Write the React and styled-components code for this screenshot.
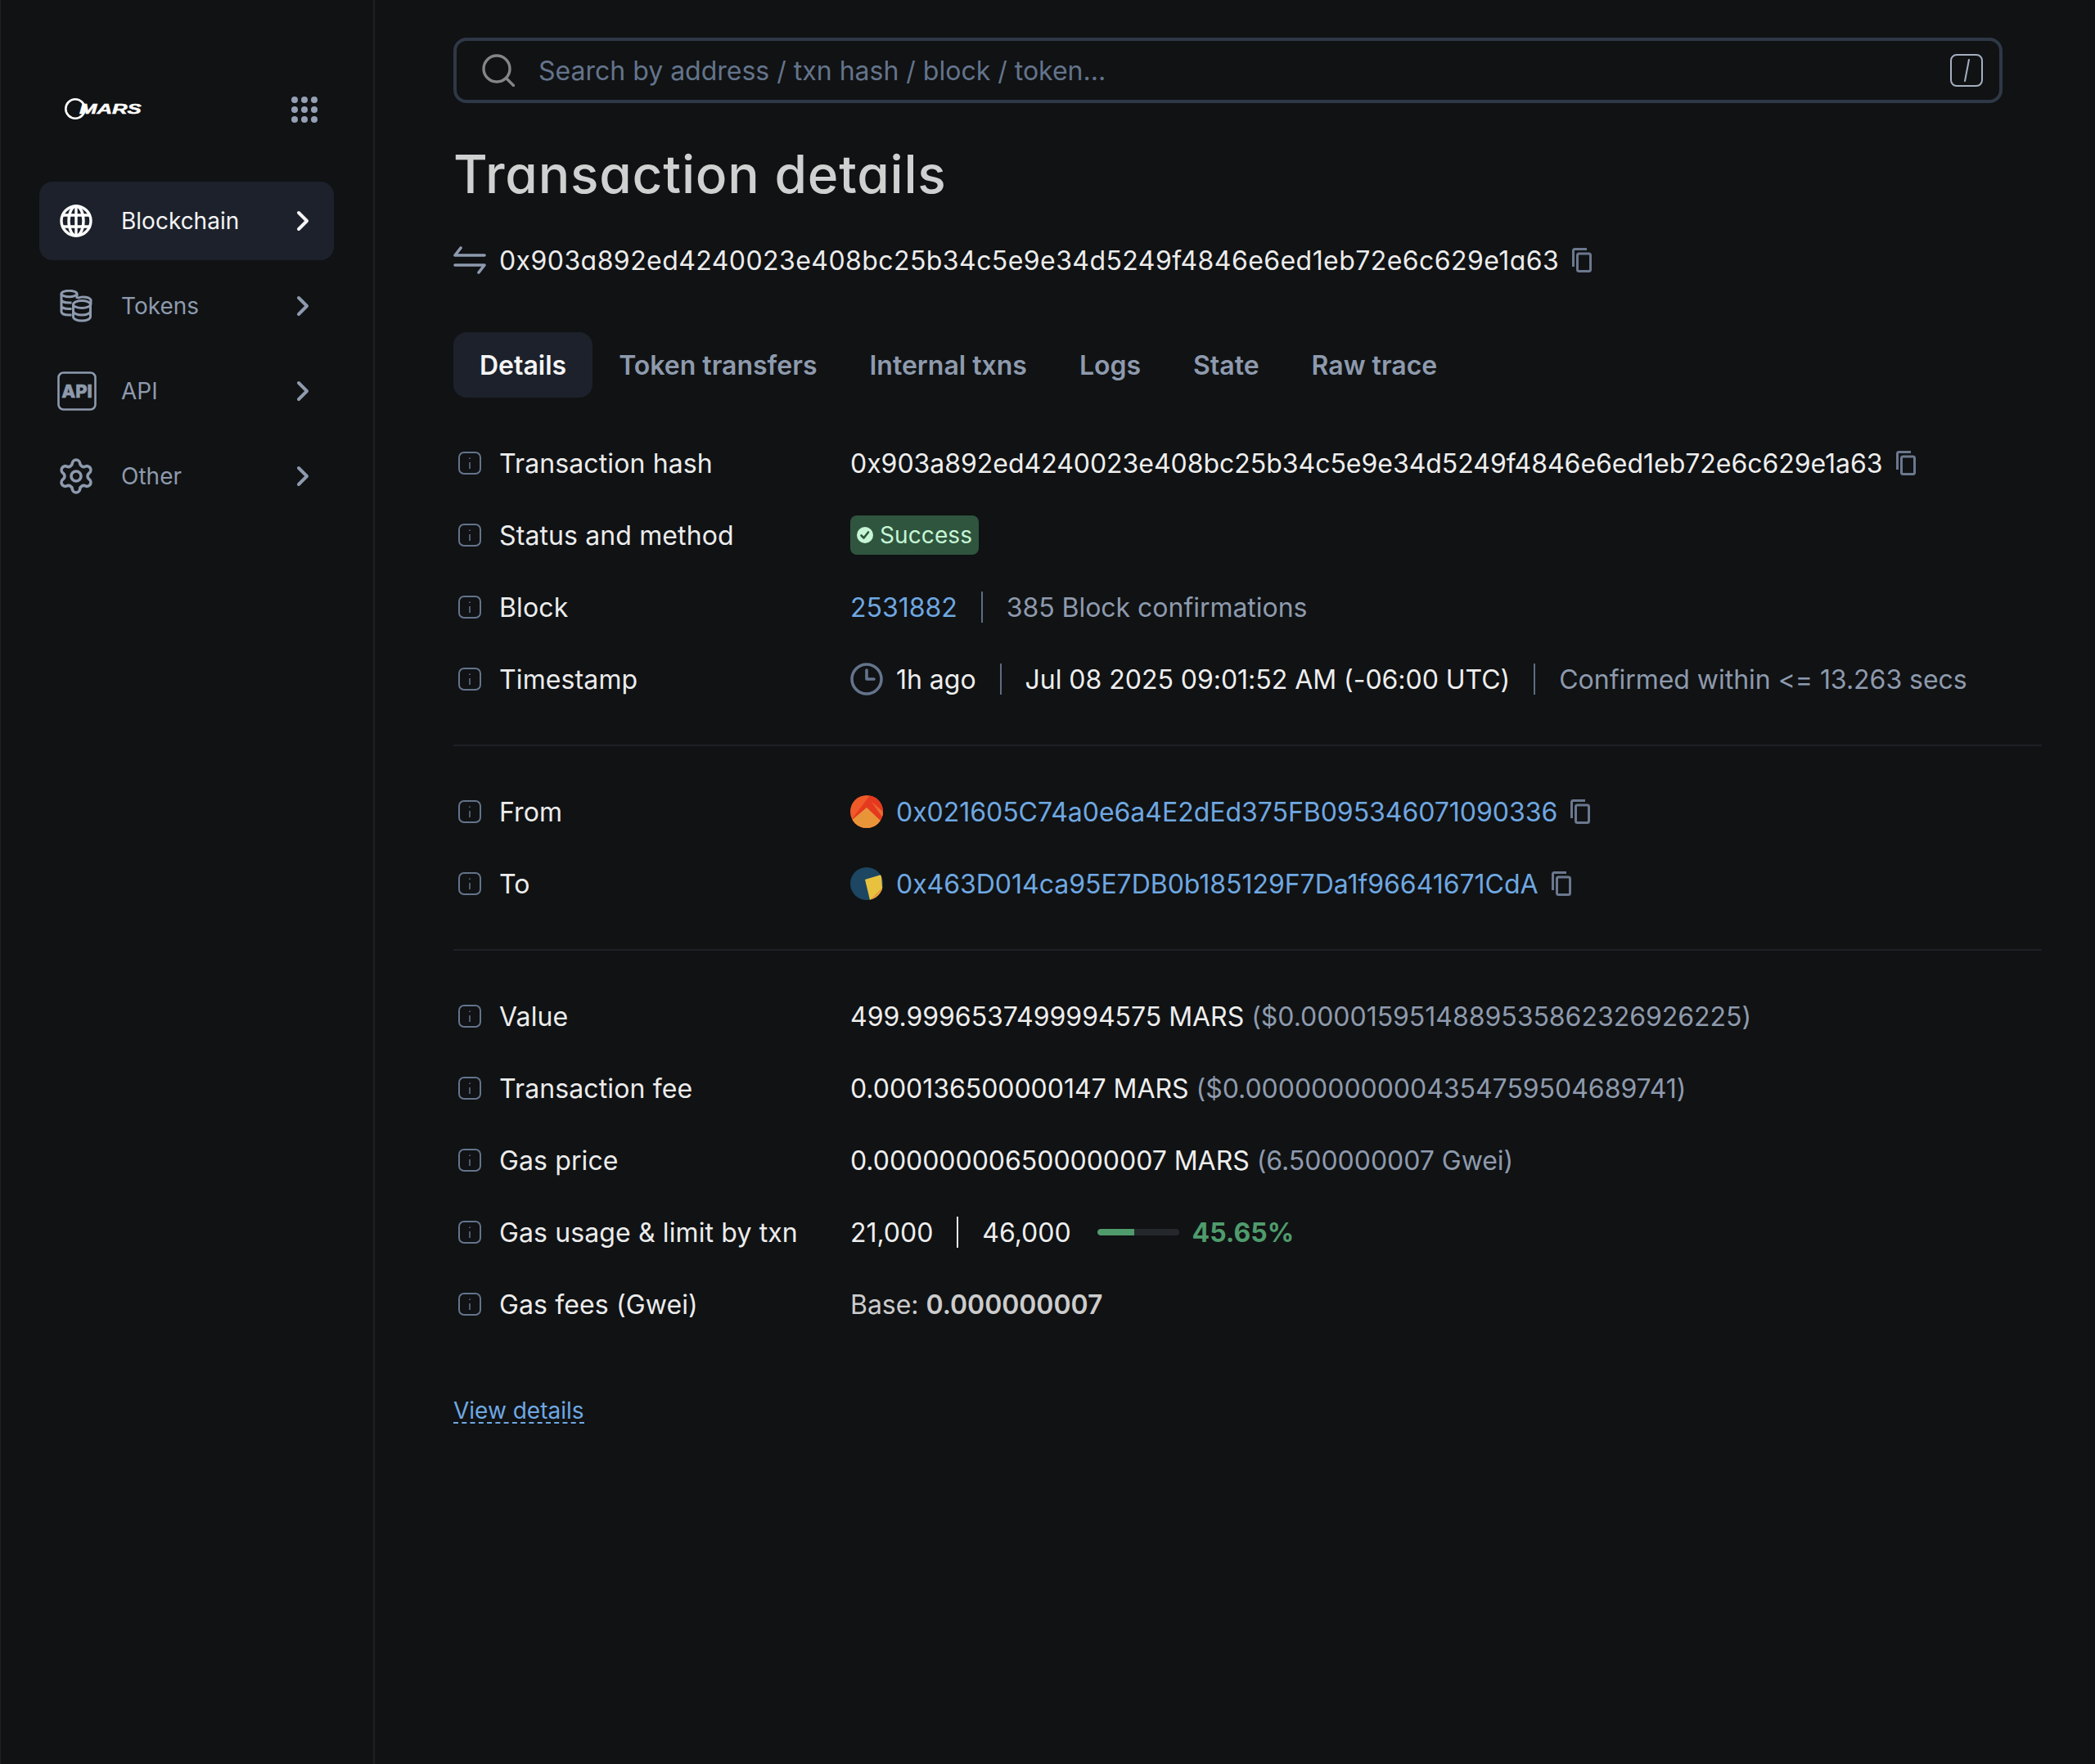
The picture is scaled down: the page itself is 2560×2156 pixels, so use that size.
import React from 'react';
import styled, { createGlobalStyle } from 'styled-components';
import { Settings } from 'lucide-react';

const GlobalStyle = createGlobalStyle`
  html, body {
    margin: 0;
    padding: 0;
    background: #101214;
  }
  * {
    box-sizing: border-box;
  }
`;

const Page = styled.div`
  display: flex;
  width: 2560px;
  min-height: 2156px;
  background: #101214;
  font-family: Inter, 'Liberation Sans', sans-serif;
  color: #eeeeee;
`;

const Sidebar = styled.aside`
  flex: none;
  width: 458px;
  padding: 116px 48px 0 47px;
  border-left: 1px solid #1d2025;
  border-right: 2px solid #1d2025;
`;

const LogoRow = styled.div`
  display: flex;
  align-items: center;
  justify-content: space-between;
  height: 36px;
  padding: 0 20px 0 31px;
  margin-bottom: 70px;
`;

const Logo = styled.div`
  display: flex;
  align-items: center;
  margin-top: -2px;
`;

const LogoWord = styled.span`
  margin-left: -8px;
  font-family: 'Liberation Sans', sans-serif;
  font-size: 16.5px;
  font-weight: 700;
  font-style: italic;
  color: #ffffff;
  transform: scaleX(1.56);
  transform-origin: left center;
  -webkit-text-stroke: 0.5px #ffffff;
`;

const NavList = styled.nav`
  display: flex;
  flex-direction: column;
  gap: 8px;
`;

const NavItem = styled.a`
  display: flex;
  align-items: center;
  height: 96px;
  padding: 0 30px 0 25px;
  border-radius: 16px;
  background: ${p => (p.$active ? '#1c212b' : 'transparent')};
  color: ${p => (p.$active ? '#f4f4f5' : '#8e9aad')};
  font-size: 28px;
`;

const NavIcon = styled.span`
  display: flex;
  align-items: center;
  justify-content: center;
  flex: none;
  width: 40px;
  height: 48px;
  margin-right: 35px;
  color: ${p => (p.$active ? '#ffffff' : '#8e9aad')};
  & > svg {
    flex: none;
  }
`;

const NavLabel = styled.span`
  flex: 1;
`;

const Main = styled.main`
  flex: 1;
  min-width: 0;
  padding: 46px 65px 0 96px;
`;

const SearchBar = styled.div`
  display: flex;
  align-items: center;
  width: 1893px;
  height: 80px;
  padding: 0 20px 0 31px;
  border: 4px solid #2f3846;
  border-radius: 16px;
`;

const SearchText = styled.span`
  flex: 1;
  margin-left: 29px;
  font-size: 32px;
  color: #64748b;
`;

const Title = styled.h1`
  margin: 48px 0 0;
  height: 80px;
  line-height: 78px;
  font-size: 64px;
  font-weight: 500;
  color: #cfd1d1;
  font-feature-settings: 'cv11' 1;
  letter-spacing: 0.8px;
`;

const HashRow = styled.div`
  display: flex;
  align-items: center;
  height: 48px;
  margin-top: 40px;
  font-size: 32px;
  letter-spacing: 0.43px;
  font-feature-settings: 'cv11' 1;
  color: #ececec;
`;

const HashIcon = styled.svg`
  flex: none;
  width: 40px;
  height: 40px;
  margin-right: 16px;
  color: #8e9aad;
`;

const Tabs = styled.div`
  display: flex;
  margin-top: 64px;
  margin-bottom: 36px;
`;

const Tab = styled.a`
  display: flex;
  align-items: center;
  height: 80px;
  padding: 0 32px;
  border-radius: 16px;
  font-size: 32px;
  font-weight: 600;
  background: ${p => (p.$active ? '#1c212b' : 'transparent')};
  color: ${p => (p.$active ? '#f4f4f5' : '#8e9aad')};
`;

const Row = styled.div`
  display: grid;
  grid-template-columns: 485px 1fr;
  align-items: center;
  height: 88px;
`;

const Label = styled.div`
  display: flex;
  align-items: center;
  padding-left: 6px;
  font-size: 32px;
  letter-spacing: 0.12px;
  color: #ececec;
`;

const InfoIcon = styled.svg`
  flex: none;
  width: 28px;
  height: 28px;
  margin-right: 22px;
  color: #64748b;
`;

const Value = styled.div`
  display: flex;
  align-items: center;
  font-size: 32px;
  letter-spacing: -0.03px;
  white-space: pre;
  color: ${p => p.$color || '#eeeeee'};
`;

const Muted = styled.span`
  color: #8e9aad;
`;

const Link = styled.a`
  color: #6fa8e2;
`;

const Strong = styled.span`
  font-weight: 600;
`;

const Divider = styled.span`
  flex: none;
  width: 2px;
  height: 38px;
  margin: 0 29px;
  background: ${p => p.$color || '#5f6d82'};
`;

const CopyIcon = styled.svg`
  flex: none;
  width: 24px;
  height: 30px;
  margin-left: 16px;
  color: #6b788e;
`;

const Badge = styled.span`
  display: flex;
  align-items: center;
  height: 48px;
  padding: 0 8px;
  border-radius: 8px;
  background: #2f553f;
  color: #c6f6d5;
  font-size: 28px;
  letter-spacing: 0.1px;
`;

const BadgeIcon = styled.svg`
  width: 20px;
  height: 20px;
  margin-right: 8px;
`;

const RoundIcon = styled.svg`
  flex: none;
  width: 40px;
  height: 40px;
  margin-right: 16px;
`;

const Separator = styled.hr`
  height: 2px;
  margin: 36px 0;
  border: 0;
  background: #1d2025;
`;

const Track = styled.div`
  width: 100px;
  height: 8px;
  margin: 0 16px 0 32px;
  border-radius: 4px;
  background: #24272b;
  overflow: hidden;
`;

const Fill = styled.div`
  height: 100%;
  border-radius: 4px 0 0 4px;
  background: #4f9b6c;
`;

const Percent = styled.span`
  font-weight: 700;
  color: #4f9b6c;
`;

const ViewDetails = styled.a`
  display: inline-block;
  margin-top: 68px;
  height: 34px;
  line-height: 36px;
  font-size: 28px;
  color: #6fa8e2;
  border-bottom: 2px dashed #6fa8e2;
`;

const GridDots = () => (
  <svg width="32" height="32" viewBox="0 0 32 32" fill="#94a0b4">
    {[4, 16, 28].map(y => [4, 16, 28].map(x => <circle key={x + '-' + y} cx={x} cy={y} r="4" />))}
  </svg>
);

const LogoRing = () => (
  <svg width="26" height="26" viewBox="0 0 26 26" fill="none" stroke="#fff" strokeWidth="2.6">
    <circle cx="13" cy="13" r="11.7" />
  </svg>
);

const GlobeIcon = () => (
  <svg width="40" height="40" viewBox="0 0 40 40" fill="none" stroke="currentColor" strokeWidth="3.4">
    <circle cx="20" cy="20" r="18" />
    <ellipse cx="20" cy="20" rx="9" ry="18" />
    <path d="M20 2v36M3.5 13h33M3.5 27h33" />
  </svg>
);

const CoinsIcon = () => (
  <svg width="40" height="40" viewBox="0 0 40 40" fill="none" stroke="currentColor" strokeWidth="3">
    <ellipse cx="11.5" cy="5" rx="9.5" ry="3.7" />
    <path d="M2 5v22c0 2.5 4 4 9.5 4h3M2 12c0 2.5 4 4 9.5 4h3M2 19.5c0 2.5 4 4 9.5 4h3M21 5v6" />
    <path d="M22 10.5c2-1 4-1.5 6-1.5 5 0 9 1.5 10 3.5v6" />
    <ellipse cx="27" cy="18" rx="10.5" ry="4.5" fill="#101214" />
    <path d="M16.5 18v15c0 3 4.5 5 10.5 5s10.5-2 10.5-5V18M16.5 26c0 3 4.5 5 10.5 5s10.5-2 10.5-5" />
  </svg>
);

const ApiIcon = () => (
  <svg width="48" height="48" viewBox="0 0 48 48" fill="none" style={{ marginLeft: 2 }}>
    <rect x="1.5" y="1.5" width="45" height="45" rx="6" stroke="currentColor" strokeWidth="2.6" />
    <text x="24" y="32" textAnchor="middle" fill="currentColor" stroke="currentColor" strokeWidth="0.6" fontFamily="Inter, sans-serif" fontSize="22" fontWeight="800">API</text>
  </svg>
);

const Chevron = () => (
  <svg width="16" height="26" viewBox="0 0 16 26" fill="none" stroke="currentColor" strokeWidth="4" strokeLinecap="round" strokeLinejoin="round">
    <path d="M3 3l10 10L3 23" />
  </svg>
);

const SearchIcon = () => (
  <svg width="40" height="40" viewBox="0 0 40 40" fill="none" stroke="#858585" strokeWidth="3.4" strokeLinecap="round">
    <circle cx="18" cy="18" r="16" />
    <path d="M30 30l8.5 8.5" />
  </svg>
);

const SlashKey = () => (
  <svg width="40" height="40" viewBox="0 0 40 40" fill="none" stroke="#a5afbf" strokeWidth="2">
    <rect x="1" y="1" width="38" height="38" rx="7" />
    <path d="M23 7l-5 26" strokeLinecap="round" />
  </svg>
);

const SwapIcon = () => (
  <HashIcon viewBox="0 0 40 40" fill="none" stroke="currentColor" strokeWidth="3.6" strokeLinecap="round" strokeLinejoin="round">
    <path d="M9 5l-7 9h36M2 26h36l-7 9" />
  </HashIcon>
);

const Info = () => (
  <InfoIcon viewBox="0 0 28 28" fill="none" stroke="currentColor" strokeWidth="2">
    <rect x="1" y="1" width="26" height="26" rx="6" />
    <path d="M14 13v8M14 7.5v1.5" strokeWidth="1.5" />
  </InfoIcon>
);

const Copy = () => (
  <CopyIcon viewBox="0 0 24 30" fill="none" stroke="currentColor" strokeWidth="3">
    <path d="M18 1.5H3A1.5 1.5 0 0 0 1.5 3v20" />
    <rect x="6.5" y="7" width="16" height="21.5" rx="2" />
  </CopyIcon>
);

const SuccessIcon = () => (
  <BadgeIcon viewBox="0 0 20 20">
    <circle cx="10" cy="10" r="10" fill="#c6f6d5" />
    <path d="M5.5 10.5l3 3 5.5-7" fill="none" stroke="#2f553f" strokeWidth="2.6" strokeLinecap="round" strokeLinejoin="round" />
  </BadgeIcon>
);

const ClockIcon = () => (
  <RoundIcon viewBox="0 0 40 40" fill="none" stroke="#64748b" strokeWidth="3.6" strokeLinecap="round" strokeLinejoin="round">
    <circle cx="20" cy="20" r="18" />
    <path d="M20 9v11h9" />
  </RoundIcon>
);

const AvatarFrom = () => (
  <RoundIcon viewBox="0 0 40 40">
    <clipPath id="avatar-from"><circle cx="20" cy="20" r="20" /></clipPath>
    <g clipPath="url(#avatar-from)">
      <rect width="40" height="40" fill="#f05a28" />
      <polygon points="0,32 24,0 40,0 40,40 0,40" fill="#e5391f" />
      <polygon points="26,8 40,20 40,28" fill="#ee6a2f" />
      <polygon points="20,15 40,34 40,40 0,40 0,32" fill="#e8953a" />
    </g>
  </RoundIcon>
);

const AvatarTo = () => (
  <RoundIcon viewBox="0 0 40 40">
    <clipPath id="avatar-to"><circle cx="20" cy="20" r="20" /></clipPath>
    <g clipPath="url(#avatar-to)">
      <rect width="40" height="40" fill="#1c4662" />
      <polygon points="18,15 38,9 40,40 24,40" fill="#e8c23f" />
      <polygon points="24,40 40,24 40,40" fill="#e59a3a" />
    </g>
  </RoundIcon>
);

const navItems = [
  { label: 'Blockchain', icon: <GlobeIcon />, active: true },
  { label: 'Tokens', icon: <CoinsIcon /> },
  { label: 'API', icon: <ApiIcon /> },
  { label: 'Other', icon: <Settings size={48} strokeWidth={1.8} /> },
];

const tabs = ['Details', 'Token transfers', 'Internal txns', 'Logs', 'State', 'Raw trace'];

const HASH = '0x903a892ed4240023e408bc25b34c5e9e34d5249f4846e6ed1eb72e6c629e1a63';

const DetailRow = ({ label, children, color }) => (
  <Row>
    <Label>
      <Info />
      {label}
    </Label>
    <Value $color={color}>{children}</Value>
  </Row>
);

export default function App() {
  return (
    <Page>
      <GlobalStyle />
      <Sidebar>
        <LogoRow>
          <Logo>
            <LogoRing />
            <LogoWord>MARS</LogoWord>
          </Logo>
          <GridDots />
        </LogoRow>
        <NavList>
          {navItems.map(item => (
            <NavItem key={item.label} $active={item.active}>
              <NavIcon $active={item.active}>{item.icon}</NavIcon>
              <NavLabel>{item.label}</NavLabel>
              <Chevron />
            </NavItem>
          ))}
        </NavList>
      </Sidebar>
      <Main>
        <SearchBar>
          <SearchIcon />
          <SearchText>Search by address / txn hash / block / token...</SearchText>
          <SlashKey />
        </SearchBar>
        <Title>Transaction details</Title>
        <HashRow>
          <SwapIcon />
          {HASH}
          <Copy />
        </HashRow>
        <Tabs>
          {tabs.map((t, i) => (
            <Tab key={t} $active={i === 0}>{t}</Tab>
          ))}
        </Tabs>

        <DetailRow label="Transaction hash">
          {HASH}
          <Copy />
        </DetailRow>
        <DetailRow label="Status and method">
          <Badge>
            <SuccessIcon />
            Success
          </Badge>
        </DetailRow>
        <DetailRow label="Block">
          <Link>2531882</Link>
          <Divider />
          <Muted>385 Block confirmations</Muted>
        </DetailRow>
        <DetailRow label="Timestamp">
          <ClockIcon />
          1h ago
          <Divider />
          Jul 08 2025 09:01:52 AM (-06:00 UTC)
          <Divider />
          <Muted>Confirmed within &lt;= 13.263 secs</Muted>
        </DetailRow>

        <Separator />

        <DetailRow label="From">
          <AvatarFrom />
          <Link>0x021605C74a0e6a4E2dEd375FB095346071090336</Link>
          <Copy />
        </DetailRow>
        <DetailRow label="To">
          <AvatarTo />
          <Link>0x463D014ca95E7DB0b185129F7Da1f96641671CdA</Link>
          <Copy />
        </DetailRow>

        <Separator />

        <DetailRow label="Value">
          499.9996537499994575 MARS <Muted>($0.0000159514889535862326926225)</Muted>
        </DetailRow>
        <DetailRow label="Transaction fee">
          0.000136500000147 MARS <Muted>($0.000000000004354759504689741)</Muted>
        </DetailRow>
        <DetailRow label="Gas price">
          0.000000006500000007 MARS <Muted>(6.500000007 Gwei)</Muted>
        </DetailRow>
        <DetailRow label="Gas usage &amp; limit by txn">
          21,000
          <Divider $color="#eeeeee" />
          46,000
          <Track>
            <Fill style={{ width: '45.65%' }} />
          </Track>
          <Percent>45.65%</Percent>
        </DetailRow>
        <DetailRow label="Gas fees (Gwei)" color="#cccccc">
          Base: <Strong>0.000000007</Strong>
        </DetailRow>

        <ViewDetails>View details</ViewDetails>
      </Main>
    </Page>
  );
}
